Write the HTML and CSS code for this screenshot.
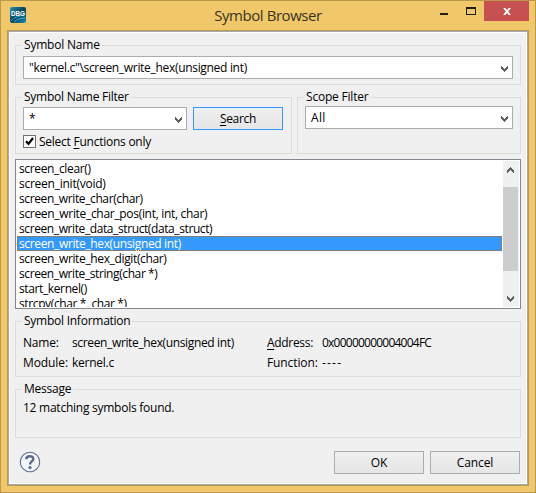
FILE: index.html
```html
<!DOCTYPE html>
<html lang="en">
<head>
<meta charset="utf-8">
<title>Symbol Browser</title>
<link rel="stylesheet" href="styles.css">
</head>
<body>
<svg width="0" height="0" class="defs">
  <defs>
    <linearGradient id="dbg" x1="0" y1="0" x2="1" y2="1"><stop offset="0" stop-color="#2b8fb4"/><stop offset=".5" stop-color="#06425d"/><stop offset="1" stop-color="#178bb5"/></linearGradient>
    <symbol id="chevron" viewBox="0 0 7 6"><path fill="#606060" d="M0 0h1v1h1v1h1v1h1v-1h1v-1h1v-1h1v3h-1v1h-1v1h-1v1h-1v-1h-1v-1h-1v-1h-1z"/></symbol>
  </defs>
</svg>
<div class="window">
  <header class="titlebar">
    <svg class="app-icon" width="16" height="16" viewBox="0 0 16 16"><rect width="16" height="16" rx="2" fill="url(#dbg)"/><path d="M1 14c3-4 7-4 14-7M4 15c3-3 7-4 11-4" fill="none" stroke="#36afd4" stroke-width="1"/><text x="8" y="9" text-anchor="middle" textLength="14" lengthAdjust="spacingAndGlyphs" class="app-text">DBG</text></svg>
    <h1>Symbol Browser</h1>
    <div class="controls">
      <span class="minimize"></span>
      <span class="maximize"></span>
      <span class="close"><svg width="8" height="7" viewBox="0 0 8 7"><path d="M1 0L7 7M7 0L1 7" stroke="#fff" stroke-width="1.9"/></svg></span>
    </div>
  </header>
  <main class="client">
    <section class="group name-group">
      <h2 class="ls-20">Symbol Name</h2>
      <div class="combo"><span class="ls-31">"kernel.c"\screen_write_hex(unsigned int)</span><svg width="7" height="6"><use href="#chevron"/></svg></div>
    </section>
    <div class="filters">
      <section class="group filter-group">
        <h2 class="ls-24">Symbol Name Filter</h2>
        <div class="filter-row">
          <div class="combo"><span class="star">*</span><svg width="7" height="6"><use href="#chevron"/></svg></div>
          <button class="button default"><span><u>S</u>earch</span></button>
        </div>
        <label class="check"><span class="box"><svg width="11" height="11" viewBox="0 0 11 11"><path d="M2 5.2L4.5 7.8L9 2" fill="none" stroke="#000" stroke-width="2.2"/></svg></span><span class="ls-24">Select <u>F</u>unctions only</span></label>
      </section>
      <section class="group scope-group">
        <h2 class="ls-20">Scope Filter</h2>
        <div class="combo"><span class="ls+30">All</span><svg width="7" height="6"><use href="#chevron"/></svg></div>
      </section>
    </div>
    <div class="list">
      <ul>
        <li class="ls-35">screen_clear()</li>
        <li class="ls-24">screen_init(void)</li>
        <li class="ls-37">screen_write_char(char)</li>
        <li class="ls-31">screen_write_char_pos(int, int, char)</li>
        <li class="ls-39">screen_write_data_struct(data_struct)</li>
        <li class="ls-35 selected">screen_write_hex(unsigned int)</li>
        <li class="ls-35">screen_write_hex_digit(char)</li>
        <li class="ls-39">screen_write_string(char *)</li>
        <li class="ls-37">start_kernel()</li>
        <li class="ls-37">strcpy(char *, char *)</li>
      </ul>
      <div class="scrollbar">
        <svg class="up" width="7" height="6"><use href="#chevron"/></svg>
        <div class="thumb"></div>
        <svg class="down" width="7" height="6"><use href="#chevron"/></svg>
      </div>
    </div>
    <section class="group info-group">
      <h2 class="ls-24">Symbol Information</h2>
      <dl>
        <dt class="ls-20">Name:</dt><dd class="ls-35">screen_write_hex(unsigned int)</dd>
        <dt class="ls-31"><u>A</u>ddress:</dt><dd class="digits">0x00000000004004FC</dd>
        <dt class="ls-10">Module:</dt><dd class="ls-24">kernel.c</dd>
        <dt class="ls-10">Function:</dt><dd class="dashes">----</dd>
      </dl>
    </section>
    <section class="group message-group">
      <h2 class="ls-24">Message</h2>
      <p class="ls-24">12 matching symbols found.</p>
    </section>
    <footer>
      <svg class="help" width="22" height="22" viewBox="0 0 22 22"><circle cx="11" cy="11" r="9.7" fill="#f4f5f7" stroke="#5b6c8c" stroke-width="1.1"/><path d="M7.3 8.2C7.5 4.3 14.3 4.3 14.3 7.9C14.3 10.4 11 10.4 11 13.4" fill="none" stroke="#5b6c8f" stroke-width="2.5"/><circle cx="11" cy="16.6" r="1.6" fill="#5b6c8f"/></svg>
      <button class="button">OK</button>
      <button class="button"><span class="ls-10">Cancel</span></button>
    </footer>
  </main>
</div>
</body>
</html>
```
FILE: styles.css
```css
* { box-sizing: border-box; }
body { margin: 0; font: 12px/16px "Open Sans", "Noto Sans", sans-serif; color: #000; white-space: nowrap; overflow: hidden; }
h1, h2, ul, dl, dd, p { margin: 0; padding: 0; font-weight: 400; }
.defs { display: block; position: absolute; }
svg { display: block; flex: none; }
u { text-decoration-thickness: 1px; text-underline-offset: 2px; }

.window { width: 536px; height: 493px; background: #f0c869; border: 1px solid #b8994f; padding: 0 6px 6px; }
.titlebar { height: 29px; display: grid; grid-template-columns: 150px 1fr 150px; }
.app-icon { margin: 6px 0 0 3px; }
.app-text { font: 700 7px "Liberation Sans", sans-serif; fill: #fff; }
.titlebar h1 { font-size: 15px; line-height: 28px; letter-spacing: -0.44px; text-align: center; color: #3a3323; }
.controls { display: flex; justify-content: flex-end; }
.minimize { width: 8px; height: 2px; background: #1e1e1e; margin: 12px 18px 0 0; }
.maximize { width: 10px; height: 8px; border: 1px solid #1e1e1e; border-top-width: 2px; margin: 6px 8px 0 0; }
.close { width: 45px; height: 20px; background: #c75050; display: flex; align-items: center; justify-content: center; padding-left: 1px; }

.client { height: 456px; background: #f0f0f0; border: 1px solid #b8994f; padding: 14px 7px 0; box-shadow: inset 0 0 0 1px #a8a9ad, inset 0 0 0 2px #fff; }
.group { border: 1px solid #dcdcdc; padding: 0 7px; }
.group h2 { font-size: 12px; line-height: 16px; width: max-content; margin: -9px 0 0 -1px; padding: 0 2px; background: #f0f0f0; }
.combo { height: 23px; border: 1px solid #abadb3; background: #fff; display: flex; align-items: center; justify-content: space-between; padding: 0 4px 0 5px; }
.combo svg { margin-top: 2px; }
.button { font: inherit; color: #000; width: 90px; height: 23px; padding: 0; border: 1px solid #acacac; background: linear-gradient(#f0f0f0, #e5e5e5); display: block; }
.default { border-color: #3399ff; letter-spacing: -0.3px; }

.name-group { height: 40px; }
.name-group .combo { margin-top: 3px; }
.filters { display: flex; gap: 5px; margin-top: 12px; height: 57px; }
.filter-group { width: 277px; }
.filter-row { display: flex; gap: 6px; margin-top: 2px; }
.filter-row .combo { width: 164px; }
.scope-group { width: 224px; }
.scope-group .combo { margin-top: 1px; }
.check { display: flex; align-items: center; gap: 3px; height: 13px; margin-top: 5px; }
.box { width: 13px; height: 13px; border: 1px solid #707070; background: #fff; }

.list { height: 150px; margin-top: 5px; border: 1px solid #828790; background: #fff; display: flex; padding: 1px; }
.list ul { width: 486px; height: 146px; overflow: hidden; list-style: none; }
.list li { height: 15px; line-height: 15px; padding-left: 2px; width: 485px; }
.list .selected { background: #3399ff; color: #fff; outline: 1px dotted #cc6600; outline-offset: -1px; }
.scrollbar { width: 16px; height: 146px; background: #f0f0f0; display: flex; flex-direction: column; }
.up { transform: scaleY(-1); margin: 6px 0 0 4px; }
.thumb { width: 15px; height: 84px; background: #cdcdcd; margin-top: 14px; }
.down { margin: 25px 0 0 4px; }

.info-group { height: 56px; margin-top: 12px; }
.info-group dl { display: grid; grid-template-columns: 49px 195px 55px auto; grid-auto-rows: 20px; line-height: 20px; margin-top: 4px; }
.message-group { height: 49px; margin-top: 12px; }
.message-group p { line-height: 20px; margin-top: 1px; }
footer { display: flex; gap: 6px; margin-top: 13px; padding-right: 1px; }
.help { margin: 0 auto 0 4px; }

.ls-10 { letter-spacing: -0.1px; }
.ls-20 { letter-spacing: -0.2px; }
.ls-24 { letter-spacing: -0.25px; }
.ls-31 { letter-spacing: -0.31px; }
.ls-35 { letter-spacing: -0.36px; }
.ls-37 { letter-spacing: -0.38px; }
.ls-39 { letter-spacing: -0.4px; }
.ls\+30 { letter-spacing: 0.3px; }
.digits { letter-spacing: -0.77px; }
.dashes { letter-spacing: 1.2px; }
```
